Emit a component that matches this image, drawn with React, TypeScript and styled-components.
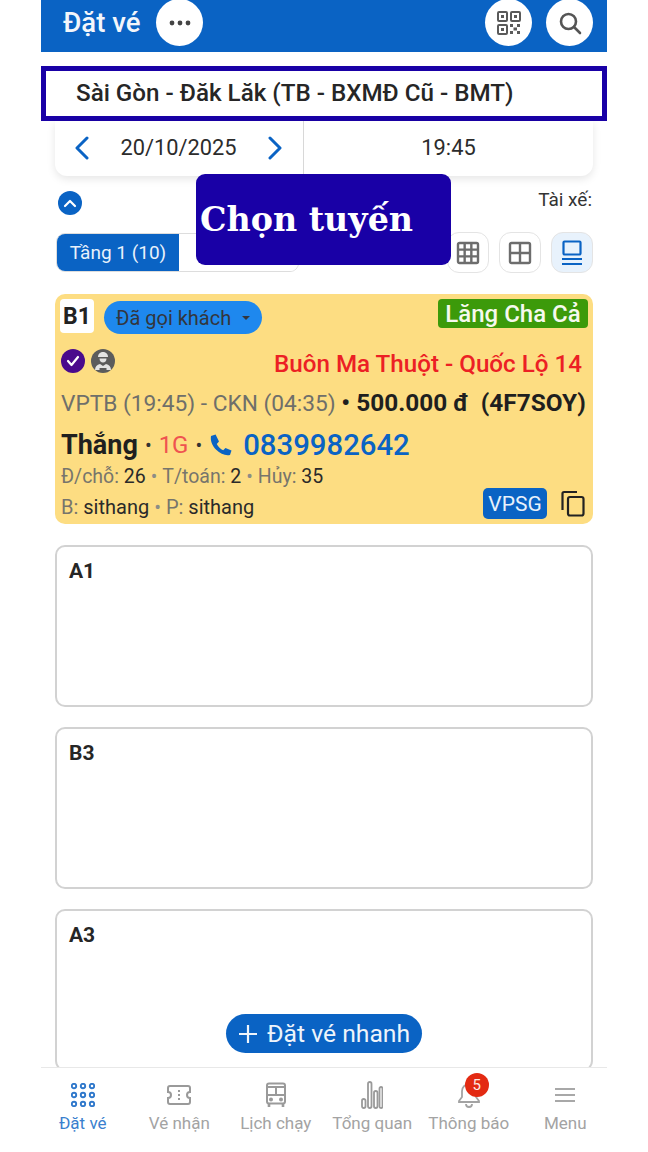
import React from "react";
import styled, { createGlobalStyle } from "styled-components";

const GlobalStyle = createGlobalStyle`
  html, body { margin: 0; padding: 0; background: #fff; }
  * { box-sizing: border-box; }
  body { font-family: Roboto, "Noto Sans", sans-serif; color: #222; }
`;

const Phone = styled.div`
  position: relative;
  width: 566px;
  height: 1152px;
  margin-left: 41px;
  display: flex;
  flex-direction: column;
  overflow: hidden;
  background: #fff;
`;

const Header = styled.header`
  height: 52px;
  flex: none;
  background: #0a63c4;
  display: flex;
  align-items: flex-start;
  padding: 0 14px 0 22px;
  gap: 16px;
`;

const HeaderTitle = styled.div`
  color: #f3f6fb;
  font-size: 27.5px;
  font-weight: 500;
  line-height: 45px;
`;

const RoundButton = styled.div`
  width: 47px;
  height: 47px;
  margin-top: -1px;
  border-radius: 50%;
  background: #fff;
  display: flex;
  align-items: center;
  justify-content: center;
  color: #444;
`;

const HeaderRight = styled.div`
  margin-left: auto;
  display: flex;
  gap: 14px;
`;

const RouteBanner = styled.div`
  height: 55px;
  flex: none;
  margin-top: 14px;
  border: 5px solid #1900a6;
  display: flex;
  align-items: center;
  padding: 0 30px 2px;
  font-size: 24.2px;
  font-weight: 500;
  color: #262626;
  background: #fff;
`;

const DateBar = styled.div`
  height: 55px;
  flex: none;
  margin: 0 14px;
  display: grid;
  grid-template-columns: 249px 1fr;
  border-radius: 0 0 12px 12px;
  box-shadow: 0 3px 8px rgba(0, 0, 0, 0.1);
`;

const DateCell = styled.div`
  display: flex;
  align-items: center;
  justify-content: space-between;
  padding: 0 20px 2px 19px;
  border-right: 1px solid #d8d8d8;
  font-size: 21.8px;
  color: #2c2c2c;
`;

const TimeCell = styled.div`
  display: flex;
  align-items: center;
  justify-content: center;
  padding-bottom: 2px;
  font-size: 21.8px;
  color: #2c2c2c;
`;

const Content = styled.main`
  flex: 1;
  min-height: 0;
  overflow: hidden;
  padding: 0 14px;
  display: flex;
  flex-direction: column;
`;

const InfoRow = styled.div`
  height: 56px;
  flex: none;
  display: flex;
  justify-content: space-between;
  padding: 15px 1px 0 3px;
`;

const CollapseDot = styled.div`
  width: 24px;
  height: 24px;
  border-radius: 50%;
  background: #0a63c4;
  display: flex;
  align-items: center;
  justify-content: center;
`;

const DriverLabel = styled.div`
  font-size: 19px;
  line-height: 18px;
  color: #333;
`;

const ControlRow = styled.div`
  height: 41px;
  flex: none;
  display: flex;
  justify-content: space-between;
  align-items: center;
  padding-left: 1px;
`;

const FloorTabs = styled.div`
  width: 243px;
  height: 39px;
  display: flex;
  border: 1px solid #ddd;
  border-radius: 9px;
  overflow: hidden;
`;

const FloorTab = styled.div<{ $active?: boolean }>`
  width: ${(p) => (p.$active ? "122px" : "auto")};
  flex: ${(p) => (p.$active ? "none" : "1")};
  display: flex;
  align-items: center;
  justify-content: center;
  font-size: 19px;
  color: ${(p) => (p.$active ? "#e8f1fb" : "#444")};
  background: ${(p) => (p.$active ? "#0a63c4" : "#fff")};
`;

const ViewButtons = styled.div`
  display: flex;
  gap: 10px;
`;

const ViewButton = styled.div<{ $active?: boolean }>`
  width: 42px;
  height: 41px;
  border-radius: 12px;
  border: 1px solid #e4e4e4;
  background: ${(p) => (p.$active ? "#e8f2fc" : "#fff")};
  color: ${(p) => (p.$active ? "#0a63c4" : "#6d6d6d")};
  display: flex;
  align-items: center;
  justify-content: center;
`;

const TicketCard = styled.section`
  height: 230px;
  flex: none;
  margin: 21px 0 1px;
  background: #fddd82;
  border-radius: 10px;
  padding: 5px 5px 0 6px;
  display: flex;
  flex-direction: column;
`;

const TicketTop = styled.div`
  display: flex;
  align-items: flex-start;
  gap: 10px;
`;

const SeatBadge = styled.div`
  width: 34px;
  height: 34px;
  margin-left: -1px;
  background: #fff;
  border-radius: 4px;
  font-size: 23px;
  font-weight: 700;
  color: #222;
  display: flex;
  align-items: center;
  justify-content: center;
`;

const StatusPill = styled.div`
  width: 158px;
  height: 33px;
  margin-top: 2px;
  border-radius: 17px;
  background: #1e88ee;
  color: #33363d;
  font-size: 20px;
  display: flex;
  align-items: center;
  justify-content: space-between;
  padding: 0 12px;
`;

const Caret = styled.span`
  width: 0;
  height: 0;
  border-left: 4px solid transparent;
  border-right: 4px solid transparent;
  border-top: 4px solid #33363d;
`;

const DriverTag = styled.div`
  margin-left: auto;
  width: 150px;
  height: 29px;
  border-radius: 4px;
  background: #3c9a0a;
  color: #f6f9ee;
  font-size: 24px;
  font-weight: 500;
  display: flex;
  align-items: center;
  justify-content: center;
  padding-top: 1px;
`;

const RouteRow = styled.div`
  height: 25px;
  margin-top: 14px;
  display: flex;
  align-items: center;
  gap: 6px;
  padding-right: 6px;
`;

const StatusIcon = styled.div<{ $bg: string }>`
  width: 24px;
  height: 24px;
  border-radius: 50%;
  background: ${(p) => p.$bg};
  display: flex;
  align-items: center;
  justify-content: center;
`;

const RouteName = styled.div`
  margin-left: auto;
  color: #ec2024;
  font-size: 24.2px;
  font-weight: 500;
  padding-top: 6px;
`;

const FareRow = styled.div`
  margin-top: 15px;
  line-height: 30px;
  font-size: 22.7px;
  color: #6f6f6a;
  white-space: nowrap;
`;

const Strong = styled.span`
  color: #1f1f1f;
  font-size: 24.4px;
  font-weight: 700;
`;

const CustomerRow = styled.div`
  margin-top: 9px;
  margin-bottom: 1px;
  height: 34px;
  display: flex;
  align-items: center;
  gap: 7px;
  font-size: 27px;
`;

const CustomerName = styled.span`
  font-weight: 700;
  color: #1f1f1f;
`;

const Dot = styled.span`
  color: #333;
  font-size: 20px;
`;

const Rank = styled.span`
  color: #ef5350;
  font-size: 24px;
`;

const PhoneNumber = styled.span`
  color: #0a63c4;
  font-size: 29.3px;
  font-weight: 500;
  display: flex;
  align-items: center;
  gap: 10px;
`;

const StatsRow = styled.div`
  font-size: 19.5px;
  line-height: 26px;
  margin-top: 1px;
  color: #77756c;
`;

const Value = styled.span`
  color: #2a2a2a;
`;

const Sep = styled.span`
  color: #8d8d86;
  margin: 0 5px;
`;

const FooterRow = styled.div`
  display: flex;
  align-items: flex-start;
  justify-content: space-between;
  font-size: 20px;
  color: #77756c;
  line-height: 32px;
  margin-top: 1px;
`;

const FooterActions = styled.div`
  display: flex;
  align-items: center;
  gap: 14px;
  padding-right: 3px;
  margin-top: -3px;
`;

const OfficeTag = styled.div`
  width: 64px;
  height: 31px;
  border-radius: 5px;
  background: #0a63c4;
  color: #e8f1fb;
  font-size: 21px;
  display: flex;
  align-items: center;
  justify-content: center;
`;

const SeatCard = styled.section`
  height: 162px;
  flex: none;
  margin-top: 20px;
  border: 2px solid #d2d2d2;
  border-radius: 10px;
  padding: 12px 12px;
  font-size: 21px;
  font-weight: 700;
  color: #262626;
`;

const QuickBook = styled.button`
  position: absolute;
  left: 185px;
  top: 1014px;
  width: 196px;
  height: 39px;
  border: 0;
  border-radius: 20px;
  background: #0a63c4;
  color: #eef4fb;
  font-family: inherit;
  font-size: 24.7px;
  display: flex;
  align-items: center;
  justify-content: center;
  gap: 9px;
`;

const Overlay = styled.div`
  position: absolute;
  left: 155px;
  top: 174px;
  width: 255px;
  height: 91px;
  border-radius: 9px;
  background: #1900a6;
  color: #fff;
  font-family: "DejaVu Serif", serif;
  font-size: 33.3px;
  font-weight: 700;
  line-height: 91px;
  padding-left: 4px;
  white-space: nowrap;
`;

const BottomNav = styled.nav`
  height: 85px;
  flex: none;
  display: grid;
  grid-template-columns: repeat(6, 96.5px);
  justify-content: center;
  background: #fff;
  border-top: 1px solid #e8e8e8;
`;

const NavItem = styled.div<{ $active?: boolean }>`
  display: flex;
  flex-direction: column;
  align-items: center;
  padding-top: 12px;
  font-size: 17px;
  gap: 3px;
  color: ${(p) => (p.$active ? "#3a7fce" : "#a3a3a3")};
  white-space: nowrap;
`;

const NavIconBox = styled.div`
  position: relative;
  width: 30px;
  height: 30px;
  display: flex;
  align-items: center;
  justify-content: center;
`;

const NavBadge = styled.span`
  position: absolute;
  left: 11px;
  top: -7px;
  width: 24px;
  height: 24px;
  border-radius: 50%;
  background: #e32a12;
  color: #fde9e4;
  font-size: 15px;
  display: flex;
  align-items: center;
  justify-content: center;
`;

const Chevron = ({ dir }: { dir: "left" | "right" }) => (
  <svg width="16" height="24" viewBox="0 0 16 24" fill="none" stroke="#0a63c4" strokeWidth="3" strokeLinecap="round" strokeLinejoin="round">
    <path d={dir === "left" ? "M13 2 3 12l10 10" : "M3 2l10 10L3 22"} />
  </svg>
);

const DotsIcon = () => (
  <svg width="22" height="6" viewBox="0 0 22 6" fill="#444">
    <circle cx="3" cy="3" r="2.4" />
    <circle cx="11" cy="3" r="2.4" />
    <circle cx="19" cy="3" r="2.4" />
  </svg>
);

const QrIcon = () => (
  <svg width="24" height="24" viewBox="0 0 24 24" fill="none" stroke="#5a5a5a" strokeWidth="2">
    <rect x="1" y="1" width="9" height="9" rx="1" />
    <rect x="14" y="1" width="9" height="9" rx="1" />
    <rect x="1" y="14" width="9" height="9" rx="1" />
    <path d="M4 5.500h3M17 5.500h3M4 18.500h3" strokeWidth="3" />
    <path d="M13 13h3v3h-3zM20 13h3v3h-3zM16.500 16.500h3.500v3h-3.500zM13 20h3v3h-3zM20 20h3v3h-3z" fill="#5a5a5a" stroke="none" />
  </svg>
);

const SearchIcon = () => (
  <svg width="24" height="24" viewBox="0 0 24 24" fill="none" stroke="#555" strokeWidth="2.6" strokeLinecap="round">
    <circle cx="10.500" cy="10.500" r="7.500" />
    <path d="m16 16 6 6" />
  </svg>
);

const BigGridIcon = ({ cells }: { cells: number }) => {
  const step = 20 / cells;
  const lines = Array.from({ length: cells - 1 }, (_, i) => 2 + step * (i + 1));
  return (
    <svg width="24" height="24" viewBox="0 0 24 24" fill="none" stroke="currentColor" strokeWidth="2.4">
      <rect x="2" y="2" width="20" height="20" rx="1.500" />
      {lines.map((v) => (
        <path key={v} d={`M${v} 2v20M2 ${v}h20`} />
      ))}
    </svg>
  );
};

const ListViewIcon = () => (
  <svg width="24" height="26" viewBox="0 0 24 26" fill="none" stroke="currentColor" strokeWidth="2.2">
    <rect x="3.500" y="1.500" width="17" height="13" rx="1" />
    <path d="M2 19h20M2 24h20" />
  </svg>
);

const NavDots = () => (
  <svg width="24" height="24" viewBox="0 0 24 24" fill="none" stroke="#2f78cb" strokeWidth="1.9">
    {[3, 12, 21].map((y) =>
      [3, 12, 21].map((x) => <circle key={`${x}-${y}`} cx={x} cy={y} r="2.2" />)
    )}
  </svg>
);

const NavTicket = () => (
  <svg width="24" height="20" viewBox="0 0 24 20" fill="none" stroke="#9a9a9a" strokeWidth="2">
    <path d="M3 1h18a2 2 0 0 1 2 2v4a3 3 0 0 0 0 6v4a2 2 0 0 1-2 2H3a2 2 0 0 1-2-2v-4a3 3 0 0 0 0-6V3a2 2 0 0 1 2-2Z" />
    <path d="M12 5v2M12 9v2M12 13v2" />
  </svg>
);

const NavBus = () => (
  <svg width="22" height="26" viewBox="0 0 22 26" fill="none" stroke="#9a9a9a" strokeWidth="2">
    <rect x="2" y="1.500" width="18" height="20" rx="2" />
    <path d="M2 13h18M11 5v8M2 5h18" />
    <path d="M4 22v3M18 22v3" strokeWidth="2.6" />
    <circle cx="6" cy="17.500" r="1" />
    <circle cx="16" cy="17.500" r="1" />
  </svg>
);

const NavBars = () => (
  <svg width="22" height="28" viewBox="0 0 22 28" fill="none" stroke="#9a9a9a" strokeWidth="1.8">
    <rect x="1" y="18" width="3.500" height="9" rx="1.700" />
    <rect x="7" y="1" width="3.500" height="26" rx="1.700" />
    <rect x="13" y="10" width="3.500" height="17" rx="1.700" />
    <rect x="18.500" y="6" width="3" height="21" rx="1.500" />
  </svg>
);

const NavBell = () => (
  <svg width="22" height="26" viewBox="0 0 22 26" fill="none" stroke="#a3a3a3" strokeWidth="1.8">
    <path d="M11 2a7 7 0 0 0-7 7v6l-3 4v1h20v-1l-3-4V9a7 7 0 0 0-7-7Z" />
    <path d="M8 22a3 3 0 0 0 6 0" />
  </svg>
);

const NavMenu = () => (
  <svg width="20" height="14" viewBox="0 0 20 14" fill="none" stroke="#a8a8a8" strokeWidth="2">
    <path d="M0 1h20M0 7h20M0 13h20" />
  </svg>
);

const PhoneIcon = () => (
  <svg width="24" height="24" viewBox="0 0 24 24" fill="#0a63c4">
    <path d="M6.600 1.500 2 3c-.8 4.500 1 9.500 5.200 13.800C11.400 21 16.500 23 21 22l1.500-4.600-6-2.500-2.300 2.400c-2.700-1.300-5-3.600-6.400-6.400L10 8.400 6.600 1.500Z" />
  </svg>
);

const CopyIcon = () => (
  <svg width="24" height="27" viewBox="0 0 24 27" fill="none" stroke="#222" strokeWidth="2.2">
    <path d="M16 2H3a1.500 1.500 0 0 0-1.500 1.500V20" />
    <rect x="7" y="7" width="15.500" height="18.500" rx="2" />
  </svg>
);

const CheckBadge = () => (
  <svg width="14" height="12" viewBox="0 0 14 12" fill="none" stroke="#fff" strokeWidth="2.2" strokeLinecap="round" strokeLinejoin="round">
    <path d="m2 6 3.500 4L12 2" />
  </svg>
);

const DriverFace = () => (
  <svg width="20" height="20" viewBox="0 0 20 20" fill="#e4e4e4">
    <path d="M5 6C5 2.800 7.500 1 10 1s5 1.800 5 5H5Z" />
    <path d="M6.500 7.500h7c0 2.500-1.500 4-3.500 4s-3.500-1.500-3.500-4Z" />
    <path d="M2 19c0-3.500 2-5.500 5-6l3 2 3-2c3 .5 5 2.500 5 6h-4.500v-2h-7v2H2Z" />
  </svg>
);

const navItems = [
  { label: "Đặt vé", icon: <NavDots />, active: true },
  { label: "Vé nhận", icon: <NavTicket /> },
  { label: "Lịch chạy", icon: <NavBus /> },
  { label: "Tổng quan", icon: <NavBars /> },
  { label: "Thông báo", icon: <NavBell />, badge: 5 },
  { label: "Menu", icon: <NavMenu /> },
];

export default function App() {
  return (
    <>
      <GlobalStyle />
      <Phone>
        <Header>
          <HeaderTitle>Đặt vé</HeaderTitle>
          <RoundButton>
            <DotsIcon />
          </RoundButton>
          <HeaderRight>
            <RoundButton>
              <QrIcon />
            </RoundButton>
            <RoundButton>
              <SearchIcon />
            </RoundButton>
          </HeaderRight>
        </Header>

        <RouteBanner>Sài Gòn - Đăk Lăk (TB - BXMĐ Cũ - BMT)</RouteBanner>

        <DateBar>
          <DateCell>
            <Chevron dir="left" />
            20/10/2025
            <Chevron dir="right" />
          </DateCell>
          <TimeCell>19:45</TimeCell>
        </DateBar>

        <Content>
          <InfoRow>
            <CollapseDot>
              <svg width="14" height="9" viewBox="0 0 14 9" fill="none" stroke="#fff" strokeWidth="2.2" strokeLinecap="round" strokeLinejoin="round">
                <path d="m2 7 5-5 5 5" />
              </svg>
            </CollapseDot>
            <DriverLabel>Tài xế:</DriverLabel>
          </InfoRow>

          <ControlRow>
            <FloorTabs>
              <FloorTab $active>Tầng 1 (10)</FloorTab>
              <FloorTab>Tầng 2</FloorTab>
            </FloorTabs>
            <ViewButtons>
              <ViewButton>
                <BigGridIcon cells={3} />
              </ViewButton>
              <ViewButton>
                <BigGridIcon cells={2} />
              </ViewButton>
              <ViewButton $active>
                <ListViewIcon />
              </ViewButton>
            </ViewButtons>
          </ControlRow>

          <TicketCard>
            <TicketTop>
              <SeatBadge>B1</SeatBadge>
              <StatusPill>
                Đã gọi khách
                <Caret />
              </StatusPill>
              <DriverTag>Lăng Cha Cả</DriverTag>
            </TicketTop>
            <RouteRow>
              <StatusIcon $bg="#4a0a8c">
                <CheckBadge />
              </StatusIcon>
              <StatusIcon $bg="#5c5c5c">
                <DriverFace />
              </StatusIcon>
              <RouteName>Buôn Ma Thuột - Quốc Lộ 14</RouteName>
            </RouteRow>
            <FareRow>
              VPTB (19:45) - CKN (04:35) <Strong>• 500.000 đ&nbsp; (4F7SOY)</Strong>
            </FareRow>
            <CustomerRow>
              <CustomerName>Thắng</CustomerName>
              <Dot>•</Dot>
              <Rank>1G</Rank>
              <Dot>•</Dot>
              <PhoneNumber>
                <PhoneIcon />
                0839982642
              </PhoneNumber>
            </CustomerRow>
            <StatsRow>
              Đ/chỗ: <Value>26</Value>
              <Sep>•</Sep>T/toán: <Value>2</Value>
              <Sep>•</Sep>Hủy: <Value>35</Value>
            </StatsRow>
            <FooterRow>
              <div>
                B: <Value>sithang</Value>
                <Sep>•</Sep>P: <Value>sithang</Value>
              </div>
              <FooterActions>
                <OfficeTag>VPSG</OfficeTag>
                <CopyIcon />
              </FooterActions>
            </FooterRow>
          </TicketCard>

          <SeatCard>A1</SeatCard>
          <SeatCard>B3</SeatCard>
          <SeatCard>A3</SeatCard>
        </Content>

        <BottomNav>
          {navItems.map((item) => (
            <NavItem key={item.label} $active={item.active}>
              <NavIconBox>
                {item.icon}
                {item.badge ? <NavBadge>{item.badge}</NavBadge> : null}
              </NavIconBox>
              {item.label}
            </NavItem>
          ))}
        </BottomNav>

        <Overlay>Chọn tuyến</Overlay>
        <QuickBook>
          <svg width="20" height="20" viewBox="0 0 20 20" fill="none" stroke="#eef4fb" strokeWidth="2.2">
            <path d="M10 1v18M1 10h18" />
          </svg>
          Đặt vé nhanh
        </QuickBook>
      </Phone>
    </>
  );
}
